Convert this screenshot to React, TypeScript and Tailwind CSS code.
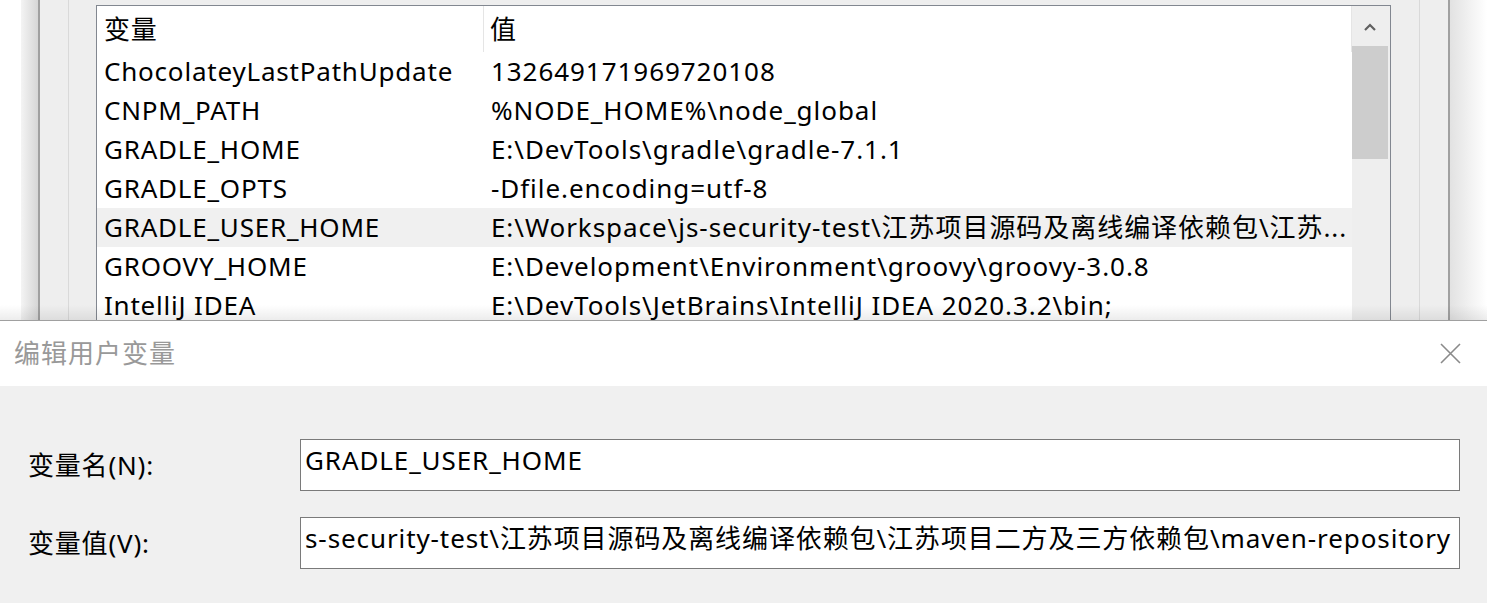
const rows: [string, string][] = [
  ['ChocolateyLastPathUpdate', '132649171969720108'],
  ['CNPM_PATH', '%NODE_HOME%\\node_global'],
  ['GRADLE_HOME', 'E:\\DevTools\\gradle\\gradle-7.1.1'],
  ['GRADLE_OPTS', '-Dfile.encoding=utf-8'],
  ['GRADLE_USER_HOME', 'E:\\Workspace\\js-security-test\\江苏项目源码及离线编译依赖包\\江苏...'],
  ['GROOVY_HOME', 'E:\\Development\\Environment\\groovy\\groovy-3.0.8'],
  ['IntelliJ IDEA', 'E:\\DevTools\\JetBrains\\IntelliJ IDEA 2020.3.2\\bin;'],
];

const font = { fontFamily: '"Noto Sans", "Noto Sans CJK SC", sans-serif' };

function EnvList() {
  return (
    <div className="relative h-[321px] overflow-hidden bg-white">
      <div className="flex h-full">
        <div className="w-[21px] bg-white" />
        <div className="w-[17px] bg-gradient-to-r from-[#f4f4f4] to-[#d6d6d6]" />
        <div className="w-[2px] bg-[#a0a0a0]" />
        <div className="w-[28px] bg-[#eeeeee]" />
        <div className="w-px bg-[#d9d9d9]" />
        <div className="w-[27px] bg-[#eeeeee]" />
        <div className="flex h-full w-[1296px] flex-col bg-[#eeeeee] pt-[5px]">
          <div className="flex flex-1 border-x border-t border-[#828790] bg-white">
            <div className="flex min-w-0 flex-1 flex-col text-[26px] leading-[39px] tracking-[0.8px] text-black">
              <div className="flex h-[46px] items-center">
                <div className="flex h-full w-[387px] items-center border-r border-[#e5e5e5] pl-[7px]">变量</div>
                <div className="flex flex-1 items-center pl-[6px]">值</div>
                <div className="h-full w-px bg-[#e5e5e5]" />
              </div>
              {rows.map(([k, v], i) => (
                <div key={k} className={`flex h-[39px] shrink-0 items-center ${i === 4 ? 'bg-[#f0f0f0]' : ''}`}>
                  <div className="w-[388px] shrink-0 whitespace-nowrap pl-[7px]">{k}</div>
                  <div className="min-w-0 flex-1 overflow-hidden whitespace-nowrap pl-[6px] tracking-[0.95px]">{v}</div>
                </div>
              ))}
            </div>
            <div className="flex w-[36px] shrink-0 flex-col bg-[#eeeeee] pt-[2px]">
              <div className="flex h-[38px] items-center justify-center">
                <svg width="12" height="8" viewBox="0 0 12 8">
                  <path d="M1 7 L6 2 L11 7" fill="none" stroke="#606060" strokeWidth="2.2" />
                </svg>
              </div>
              <div className="h-[113px] bg-[#cdcdcd]" />
            </div>
            <div className="w-[2px] shrink-0 bg-[#eeeeee]" />
          </div>
        </div>
        <div className="w-[28px] bg-[#eeeeee]" />
        <div className="w-px bg-[#d9d9d9]" />
        <div className="w-[28px] bg-[#eeeeee]" />
        <div className="w-[2px] bg-[#a0a0a0]" />
        <div className="w-[37px] bg-gradient-to-r from-[#e2e2e2] to-white" />
      </div>
      <div className="pointer-events-none absolute inset-x-0 bottom-0 h-[16px] bg-gradient-to-b from-transparent to-[#00000014]" />
      <div className="absolute inset-x-0 bottom-0 h-px bg-[#a0a0a0]" />
    </div>
  );
}

function Field({ label, value, top }: { label: string; value: string; top: string }) {
  return (
    <div className={`flex items-center ${top}`}>
      <div className="w-[272px] text-[26px] tracking-[0.8px] text-black">{label}</div>
      <div className="flex h-[52px] w-[1160px] items-start overflow-hidden border border-[#7a7a7a] bg-white px-[4px] pt-[2px] text-[26px] leading-[36px] tracking-[0.9px] text-black">
        <span className="whitespace-nowrap">{value}</span>
      </div>
    </div>
  );
}

export default function App() {
  return (
    <div className="h-[603px] w-[1487px] overflow-hidden bg-[#f0f0f0]" style={font}>
      <EnvList />
      <div className="flex h-[65px] items-center justify-between bg-white pl-[14px] pr-[26px]">
        <div className="text-[26px] tracking-[1px] text-[#999999]">编辑用户变量</div>
        <svg width="21" height="21" viewBox="0 0 21 21">
          <path d="M1 1 L20 20 M20 1 L1 20" stroke="#8a8a8a" strokeWidth="1.6" />
        </svg>
      </div>
      <div className="pl-[28px] pt-[53px]">
        <Field label="变量名(N):" value="GRADLE_USER_HOME" top="" />
        <Field
          label="变量值(V):"
          value="s-security-test\江苏项目源码及离线编译依赖包\江苏项目二方及三方依赖包\maven-repository"
          top="mt-[26px]"
        />
      </div>
    </div>
  );
}
